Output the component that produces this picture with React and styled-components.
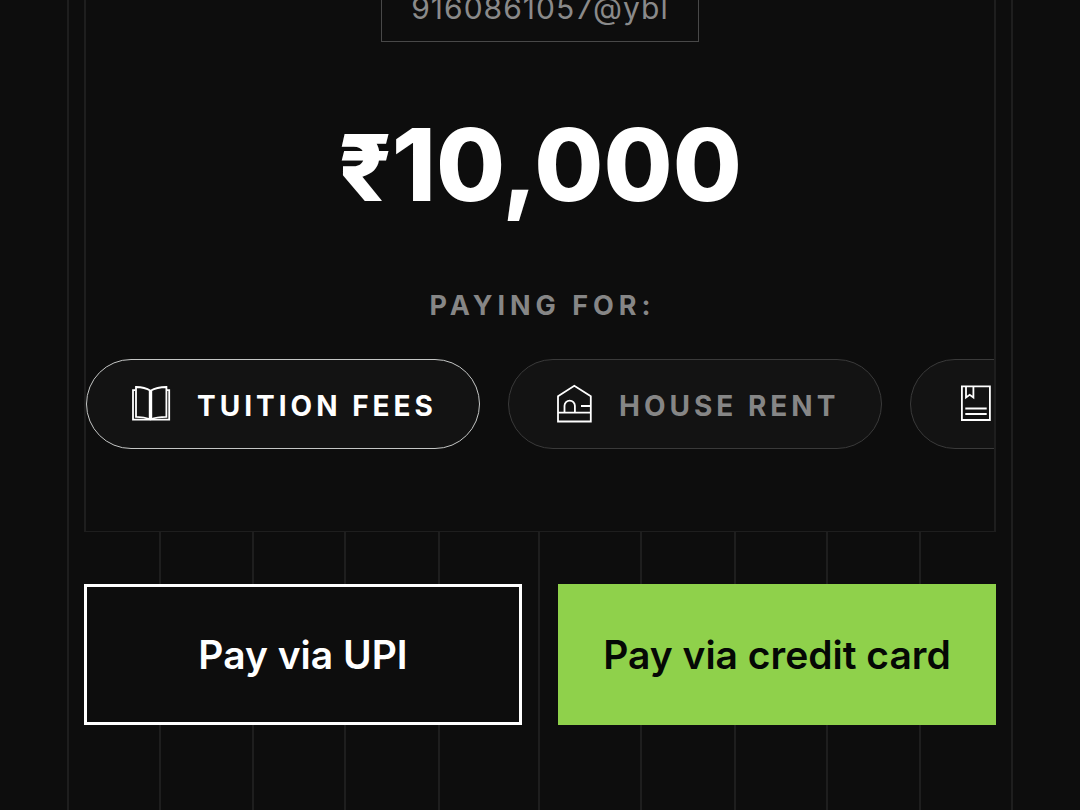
import React, { useState } from "react";
import styled, { createGlobalStyle } from "styled-components";

const GlobalStyle = createGlobalStyle`
  *, *::before, *::after { box-sizing: border-box; }
  body {
    margin: 0;
    background: #0d0d0d;
    color: #ffffff;
    font-family: Inter, "Liberation Sans", sans-serif;
  }
  button { font-family: inherit; cursor: pointer; }
`;

const Page = styled.main`
  min-height: 100vh;
  padding: 0 67px;
  display: flex;
  overflow: hidden;
`;

const Frame = styled.div`
  position: relative;
  flex: 1;
  min-width: 0;
  padding: 0 17px;
`;

const Guides = styled.div`
  position: absolute;
  inset: 0;
  display: grid;
  grid-template-columns: 92fr 93fr 92fr 94fr 100fr 102fr 94fr 92fr 93fr 92fr;
  border-right: 2px solid #1e1e1e;
`;

const Guide = styled.span`
  border-left: 2px solid #1e1e1e;
`;

const Content = styled.div`
  position: relative;
  display: flex;
  flex-direction: column;
  gap: 52px;
`;

const Card = styled.section`
  display: flex;
  flex-direction: column;
  align-items: center;
  margin-top: -40px;
  padding-bottom: 82px;
  background: #0d0d0d;
  border: 1px solid #1e1e1e;
  border-width: 0 2px 1px;
`;

const Address = styled.div`
  height: 82px;
  padding: 28px 29px 0;
  border: 1px solid #484848;
  color: #8a8a8a;
  font-size: 30px;
  line-height: 38px;
  letter-spacing: 1px;
`;

const Amount = styled.h1`
  margin: 61px 0 0;
  font-size: 100px;
  font-weight: 800;
  line-height: 124px;
`;

const Currency = styled.span`
  font-size: 92px;
`;

const Caption = styled.h2`
  margin: 58px 0 0;
  padding-left: 5px;
  color: #868686;
  font-size: 27px;
  font-weight: 700;
  line-height: 36px;
  letter-spacing: 5px;
`;

const Chips = styled.div`
  align-self: stretch;
  display: flex;
  gap: 28px;
  margin-top: 35px;
  overflow: hidden;
`;

const Chip = styled.button`
  flex: none;
  display: flex;
  align-items: center;
  gap: 26px;
  height: 90px;
  min-width: ${(p) => p.$width}px;
  padding: 0 40px 0 44px;
  border: 1px solid ${(p) => (p.$active ? "#c4c6c5" : "#3a3a3a")};
  border-radius: 45px;
  background: #131313;
  color: ${(p) => (p.$active ? "#ffffff" : "#868686")};
  font-size: 28px;
  font-weight: 700;
  line-height: 36px;
  letter-spacing: 4px;
`;

const ChipLabel = styled.span`
  padding-top: 4px;
`;

const Icon = styled.svg`
  flex: none;
  width: 40px;
  height: 40px;
  fill: none;
  stroke: #ffffff;
  stroke-width: 1.8;
`;

const Actions = styled.div`
  display: grid;
  grid-template-columns: 1fr 1fr;
  gap: 36px;
`;

const PayButton = styled.button`
  height: 141px;
  padding: 0;
  border: 3px solid ${(p) => (p.$filled ? "#8fd14b" : "#ffffff")};
  background: ${(p) => (p.$filled ? "#8fd14b" : "#0d0d0d")};
  color: ${(p) => (p.$filled ? "#050805" : "#ffffff")};
  font-size: 39px;
  font-weight: 600;
  line-height: 48px;
`;

const BookIcon = () => (
  <Icon viewBox="0 0 40 40" aria-hidden="true">
    <path d="M4.5 6.2H2V35.7H38.2V6.2H35.7" />
    <path d="M19.5 6.8C15.5 4.1 10.5 3 5 3V32.8C10 32.8 15 33.5 19.5 35.3C24 33.5 29 32.8 35.4 32.8V3C29.5 3 24 4.1 19.5 6.8Z" />
    <path d="M19.5 6.8V35.3" strokeWidth="3.4" />
  </Icon>
);

const HouseIcon = () => (
  <Icon viewBox="0 0 40 40" aria-hidden="true">
    <path d="M5 12.3L21.3 1.7L37.8 12.3V37.5H5Z" />
    <path d="M5 28.7H37.8M11.5 28.7V21.8A5.2 5.2 0 0 1 21.9 21.8V28.7M28 22H37.8" />
  </Icon>
);

const BookmarkIcon = () => (
  <Icon viewBox="0 0 40 40" aria-hidden="true">
    <path d="M6.9 2.3H34.9V36H6.9Z" />
    <path d="M11 2.3V13.5L14.7 10.8L18.4 13.5V2.3M10.3 24.5H31.7M10.3 30H31.7" />
  </Icon>
);

const purposes = [
  { id: "tuition", label: "TUITION FEES", icon: BookIcon, width: 394 },
  { id: "rent", label: "HOUSE RENT", icon: HouseIcon, width: 374 },
  { id: "other", icon: BookmarkIcon, width: 374 },
];

export default function App() {
  const [selected, setSelected] = useState("tuition");
  return (
    <Page>
      <GlobalStyle />
      <Frame>
        <Guides aria-hidden="true">
          {Array.from({ length: 10 }, (_, i) => (
            <Guide key={i} />
          ))}
        </Guides>
        <Content>
          <Card>
            <Address>9160861057@ybl</Address>
            <Amount>
              <Currency>₹</Currency>10,000
            </Amount>
            <Caption>PAYING FOR:</Caption>
            <Chips>
              {purposes.map(({ id, label, icon: Glyph, width }) => (
                <Chip
                  key={id}
                  type="button"
                  $width={width}
                  $active={selected === id}
                  aria-pressed={selected === id}
                  onClick={() => setSelected(id)}
                >
                  <Glyph />
                  {label && <ChipLabel>{label}</ChipLabel>}
                </Chip>
              ))}
            </Chips>
          </Card>
          <Actions>
            <PayButton type="button">Pay via UPI</PayButton>
            <PayButton type="button" $filled>
              Pay via credit card
            </PayButton>
          </Actions>
        </Content>
      </Frame>
    </Page>
  );
}
